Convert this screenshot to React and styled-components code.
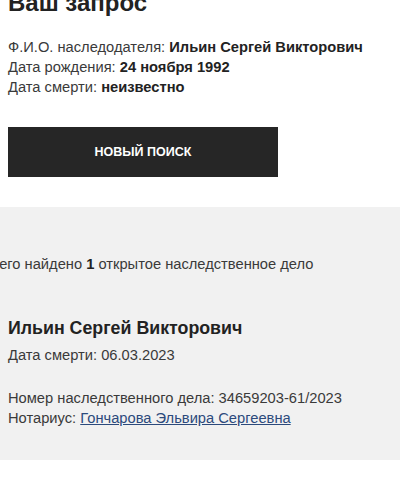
import React from 'react';
import styled, { createGlobalStyle } from 'styled-components';

const GlobalStyle = createGlobalStyle`
    body {
        margin: 0;
        background: #fff;
        color: #222;
        font-family: 'Liberation Sans', Arial, sans-serif;
    }
`

const Page = styled.div`
    display: flex;
    flex-direction: column;
    margin-top: -12px;
`

const Request = styled.section`
    padding: 0 8px;
`

const Title = styled.h1`
    margin: 0;
    font-size: 24px;
    line-height: 29px;
    font-weight: 700;
    color: #222;
`

const InfoList = styled.div`
    margin-top: 20px;
`

const InfoRow = styled.div`
    font-size: 14.7px;
    line-height: 20px;
    color: #3a3a3a;

    b {
        color: #222;
        font-weight: 700;
    }
`

const NewSearchButton = styled.button`
    display: block;
    width: 270px;
    height: 50px;
    margin-top: 30px;
    border: none;
    background: #262626;
    color: #fff;
    font-family: 'Liberation Sans', Arial, sans-serif;
    font-size: 12.5px;
    font-weight: 700;
    text-transform: uppercase;
    cursor: pointer;
`

const Results = styled.section`
    margin-top: 30px;
    background: #f1f1f1;
    padding: 47px 8px 32px;
`

const Summary = styled.p`
    margin: 0 0 0 -26px;
    font-size: 14.7px;
    line-height: 20px;
    color: #3a3a3a;
    white-space: nowrap;

    b {
        color: #222;
    }
`

const Case = styled.div`
    margin-top: 42px;
`

const CaseName = styled.h3`
    margin: 0;
    font-size: 17.8px;
    line-height: 24px;
    font-weight: 700;
    color: #222;
`

const CaseLine = styled.div`
    font-size: 14.7px;
    line-height: 20px;
    color: #3a3a3a;
    margin-top: ${props => props.$gap || 0}px;
`

const NotaryLink = styled.a`
    color: #2c4a7c;
    text-decoration: underline;
`

const App = () => {
    return (
        <Page>
            <GlobalStyle />
            <Request>
                <Title>Ваш запрос</Title>
                <InfoList>
                    <InfoRow>Ф.И.О. наследодателя: <b>Ильин Сергей Викторович</b></InfoRow>
                    <InfoRow>Дата рождения: <b>24 ноября 1992</b></InfoRow>
                    <InfoRow>Дата смерти: <b>неизвестно</b></InfoRow>
                </InfoList>
                <NewSearchButton>Новый поиск</NewSearchButton>
            </Request>

            <Results>
                <Summary>Всего найдено <b>1</b> открытое наследственное дело</Summary>
                <Case>
                    <CaseName>Ильин Сергей Викторович</CaseName>
                    <CaseLine $gap={5}>Дата смерти: 06.03.2023</CaseLine>
                    <CaseLine $gap={23}>Номер наследственного дела: 34659203-61/2023</CaseLine>
                    <CaseLine>Нотариус: <NotaryLink href="#">Гончарова Эльвира Сергеевна</NotaryLink></CaseLine>
                </Case>
            </Results>
        </Page>
    );
};

export default App;
